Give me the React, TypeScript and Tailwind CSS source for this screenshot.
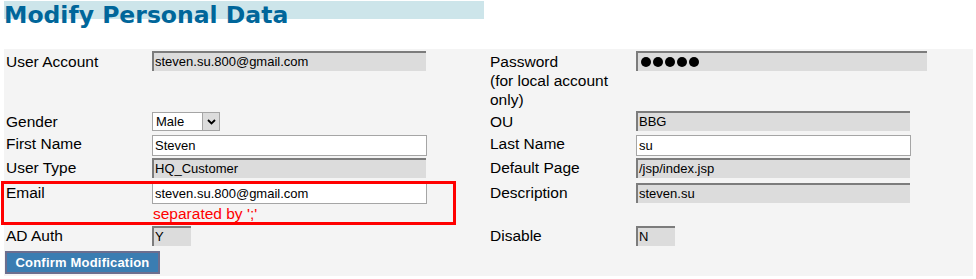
const RO = ({ value, w }: { value: string; w: string }) => (
  <div
    className={`${w} h-[20px] bg-[#dcdcdc] border-t-2 border-l-2 border-[#7c7c7c] pl-[1px] text-[13px] leading-[18px] text-black whitespace-nowrap overflow-hidden`}
  >
    {value}
  </div>
);

const TextBox = ({ value }: { value: string }) => (
  <div className="w-[275px] h-[21px] bg-white border border-[#a5a5a5] pl-[2px] text-[13px] leading-[19px] text-black">
    {value}
  </div>
);

const Label = ({ children }: { children: React.ReactNode }) => (
  <div className="px-[2px] text-[15.5px] leading-[19px] text-black">{children}</div>
);

export default function App() {
  return (
    <div className="relative w-[976px] h-[279px] bg-white overflow-hidden font-['Liberation_Sans',Arial,sans-serif]">
      {/* title */}
      <div className="h-[49px] pt-[12px] pl-[4px]">
        <div className="w-[480px] h-[18px] bg-[#cde5ea]">
          <h1 className="-mt-[11px] leading-[28px] text-[23.5px] font-bold text-[#00669a] font-['DejaVu_Sans',Verdana,sans-serif] whitespace-nowrap">
            Modify Personal Data
          </h1>
        </div>
      </div>

      <div className="ml-[4px] w-[969px] h-[227px] bg-[#f4f4f4]">
        <div className="grid grid-cols-[146px_338px_146px_338px] grid-rows-[61px_23px_24px_24px_43px_24px]">
          {/* row 1 */}
          <div className="pt-[3px]">
            <Label>User Account</Label>
          </div>
          <div className="pt-[2px] px-[2px]">
            <RO w="w-[274px]" value="steven.su.800@gmail.com" />
          </div>
          <div className="pt-[3px]">
            <Label>
              Password
              <br />
              (for local account
              <br />
              only)
            </Label>
          </div>
          <div className="pt-[2px] px-[2px]">
            <div className="w-[291px] h-[20px] bg-[#dcdcdc] border-t-2 border-l-2 border-[#7c7c7c] pl-[3px] flex items-center gap-[2px]">
              {[0, 1, 2, 3, 4].map((i) => (
                <span key={i} className="w-[10px] h-[10px] rounded-full bg-black" />
              ))}
            </div>
          </div>

          {/* row 2 */}
          <div className="pt-[2px]">
            <Label>Gender</Label>
          </div>
          <div className="pt-[2px] px-[2px]">
            <div className="w-[68px] h-[19px] bg-white border border-[#a5a5a5] flex items-center justify-between text-[13px] text-black">
              <span className="pl-[3px] leading-[17px]">Male</span>
              <span className="w-[17px] h-[17px] bg-[#dcdcdc] border-l border-[#a5a5a5] flex items-center justify-center">
                <svg width="9" height="6" viewBox="0 0 9 6">
                  <path d="M1 1 L4.5 4.5 L8 1" fill="none" stroke="#000" strokeWidth="1.8" />
                </svg>
              </span>
            </div>
          </div>
          <div className="pt-[2px]">
            <Label>OU</Label>
          </div>
          <div className="pt-[1px] px-[2px]">
            <RO w="w-[274px]" value="BBG" />
          </div>

          {/* row 3 */}
          <div className="pt-[1px]">
            <Label>First Name</Label>
          </div>
          <div className="pt-[2px] px-[2px]">
            <TextBox value="Steven" />
          </div>
          <div className="pt-[1px]">
            <Label>Last Name</Label>
          </div>
          <div className="pt-[2px] px-[2px]">
            <TextBox value="su" />
          </div>

          {/* row 4 */}
          <div className="pt-[1px]">
            <Label>User Type</Label>
          </div>
          <div className="pt-[1px] px-[2px]">
            <RO w="w-[274px]" value="HQ_Customer" />
          </div>
          <div className="pt-[1px]">
            <Label>Default Page</Label>
          </div>
          <div className="pt-[1px] px-[2px]">
            <RO w="w-[274px]" value="/jsp/index.jsp" />
          </div>

          {/* row 5 */}
          <div className="pt-[2px]">
            <Label>Email</Label>
          </div>
          <div className="pt-[2px] px-[2px]">
            <TextBox value="steven.su.800@gmail.com" />
            <div className="pl-[1px] text-[15.5px] leading-[19px] text-[#ff0000]">separated by ';'</div>
          </div>
          <div className="pt-[2px]">
            <Label>Description</Label>
          </div>
          <div className="pt-[2px] px-[2px]">
            <RO w="w-[274px]" value="steven.su" />
          </div>

          {/* row 6 */}
          <div className="pt-[2px]">
            <Label>AD Auth</Label>
          </div>
          <div className="pt-[2px] px-[2px]">
            <RO w="w-[39px]" value="Y" />
          </div>
          <div className="pt-[2px]">
            <Label>Disable</Label>
          </div>
          <div className="pt-[2px] px-[2px]">
            <RO w="w-[39px]" value="N" />
          </div>
        </div>

        <div className="pt-[2px] pl-[1px]">
          <button className="w-[155px] h-[23px] bg-[#3a7db2] border-2 border-[#6c6e8e] text-white text-[13px] font-bold leading-[19px] tracking-[0.2px]">
            Confirm Modification
          </button>
        </div>
      </div>

      {/* highlight annotation */}
      <div className="absolute left-[1px] top-[181px] w-[455px] h-[44px] border-[3px] border-[#ff0000]" />
    </div>
  );
}
